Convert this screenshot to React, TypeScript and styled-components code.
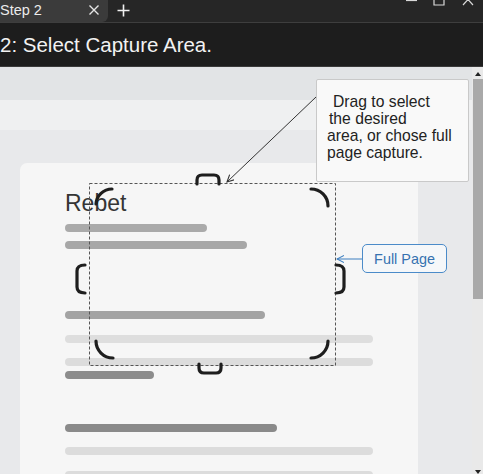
import React from "react";
import styled, { createGlobalStyle } from "styled-components";

const Global = createGlobalStyle`
  html, body { margin: 0; padding: 0; background: #e8e9eb; overflow: hidden; }
  * { box-sizing: border-box; }
`;

const Frame = styled.div`
  position: relative;
  width: 483px;
  height: 474px;
  overflow: hidden;
  font-family: "Liberation Sans", Arial, sans-serif;
  display: flex;
  flex-direction: column;
`;

const TabBar = styled.div`
  height: 23px;
  flex: none;
  display: flex;
  align-items: stretch;
  background: #262626;
  border-bottom: 1px solid #3e3e3e;
`;

const Tab = styled.div`
  width: 108px;
  display: flex;
  align-items: center;
  justify-content: space-between;
  padding: 0 8px 2px 0;
  background: #3b3b3b;
  border-bottom-right-radius: 6px;
  color: #ececec;
  font-size: 14.5px;
`;

const TabIcon = styled.svg`
  flex: none;
  display: block;
`;

const NewTab = styled.div`
  width: 30px;
  display: flex;
  align-items: center;
  justify-content: center;
  padding-bottom: 2px;
`;

const WindowControls = styled.div`
  margin-left: auto;
  display: flex;
  align-items: flex-start;
`;

const TitleBar = styled.div`
  height: 44px;
  flex: none;
  background: #1d1d1d;
  color: #f2f2f2;
  font-size: 20.5px;
  line-height: 24px;
  padding: 10px 0 0 0;
  white-space: nowrap;
  border-bottom: 1px solid #3a3a3a;
`;

const Viewport = styled.div`
  flex: 1;
  display: flex;
  min-height: 0;
`;

const Main = styled.div`
  flex: 1;
  display: flex;
  flex-direction: column;
  min-width: 0;
`;

const Band = styled.div<{ $h: number; $c: string }>`
  height: ${(p) => p.$h}px;
  flex: none;
  background: ${(p) => p.$c};
`;

const Stage = styled.div`
  flex: 1;
  background: #e8e9eb;
  padding: 33px 0 0 20px;
`;

const Card = styled.div`
  width: 398px;
  height: 100%;
  background: #f6f6f6;
  border-radius: 7px 7px 0 0;
  padding: 27px 0 0 45px;
  display: flex;
  flex-direction: column;
  align-items: flex-start;
`;

const Heading = styled.div`
  font-size: 23px;
  line-height: 26px;
  color: #353535;
`;

const Bar = styled.div<{ $w: number; $c: string; $gap: number }>`
  flex: none;
  width: ${(p) => p.$w}px;
  height: 8px;
  margin-top: ${(p) => p.$gap}px;
  border-radius: 4px;
  background: ${(p) => p.$c};
`;

const Scrollbar = styled.div`
  width: 11px;
  flex: none;
  background: #e9e9e9;
  display: flex;
  flex-direction: column;
  align-items: center;
  padding-top: 5px;
`;

const Arrow = styled.div<{ $down?: boolean }>`
  width: 0;
  height: 0;
  border-left: 3px solid transparent;
  border-right: 3px solid transparent;
  ${(p) => (p.$down ? "border-top: 4px solid #222;" : "border-bottom: 4px solid #222;")}
  flex: none;
`;

const Thumb = styled.div`
  margin-top: 3px;
  width: 10px;
  margin-left: 1px;
  height: 220px;
  background: #a9a9a9;
`;

const Spacer = styled.div`
  flex: 1;
`;

const Overlay = styled.svg`
  position: absolute;
  left: 0;
  top: 0;
  pointer-events: none;
`;

const Callout = styled.div`
  position: absolute;
  left: 316px;
  top: 79px;
  width: 153px;
  height: 103px;
  background: #f9f9f9;
  border: 1px solid #c9c9c9;
  border-radius: 2px;
  padding: 13px 0 0 0;
  color: #222;
  font-size: 15.7px;
  line-height: 17px;
`;

const CalloutLine = styled.div<{ $indent: number }>`
  padding-left: ${(p) => p.$indent}px;
  white-space: nowrap;
`;

const FullPage = styled.div`
  position: absolute;
  left: 362px;
  top: 244px;
  width: 85px;
  height: 29px;
  border: 1px solid #4b8bc9;
  border-radius: 5px;
  background: #f5f7f9;
  color: #3572b0;
  font-size: 14.4px;
  display: flex;
  align-items: center;
  justify-content: center;
`;

const bars = [
  { w: 142, c: "#aaaaaa", gap: 8 },
  { w: 182, c: "#a7a7a7", gap: 9 },
  { w: 200, c: "#a3a3a3", gap: 62 },
  { w: 308, c: "#dedede", gap: 16 },
  { w: 308, c: "#dcdcdc", gap: 15 },
  { w: 89, c: "#8c8c8c", gap: 5 },
  { w: 212, c: "#8a8a8a", gap: 45 },
  { w: 308, c: "#dcdcdc", gap: 15 },
  { w: 308, c: "#dcdcdc", gap: 16 },
];

export default function App() {
  return (
    <>
      <Global />
      <Frame>
        <TabBar>
          <Tab>
            <span>Step 2</span>
            <TabIcon width="12" height="12" viewBox="0 0 12 12">
              <path d="M1.5 1.5 L10.5 10.5 M10.5 1.5 L1.5 10.5" stroke="#e6e6e6" strokeWidth="1.4" />
            </TabIcon>
          </Tab>
          <NewTab>
            <TabIcon width="13" height="13" viewBox="0 0 13 13">
              <path d="M6.5 0.5 V12.5 M0.5 6.5 H12.5" stroke="#f0f0f0" strokeWidth="1.6" />
            </TabIcon>
          </NewTab>
          <WindowControls>
            <TabIcon width="80" height="8" viewBox="0 0 80 8">
              <path d="M3 0.5 H14" stroke="#d8d8d8" strokeWidth="1.2" />
              <path d="M31 -4 V5 H41 V-4" stroke="#d8d8d8" strokeWidth="1.2" fill="none" />
              <path d="M60 -6 L70 5 M70 -6 L60 5" stroke="#d8d8d8" strokeWidth="1.2" />
            </TabIcon>
          </WindowControls>
        </TabBar>
        <TitleBar>2: Select Capture Area.</TitleBar>
        <Viewport>
          <Main>
            <Band $h={33} $c="#e2e4e6" />
            <Band $h={30} $c="#eff0f1" />
            <Stage>
              <Card>
                <Heading>Rebet</Heading>
                {bars.map((b, i) => (
                  <Bar key={i} $w={b.w} $c={b.c} $gap={b.gap} />
                ))}
              </Card>
            </Stage>
          </Main>
          <Scrollbar>
            <Arrow />
            <Thumb />
            <Spacer />
            <Arrow $down />
          </Scrollbar>
        </Viewport>

        <Overlay width="483" height="474" viewBox="0 0 483 474">
          <defs>
            <marker id="ah" markerWidth="8" markerHeight="8" refX="7" refY="4" orient="auto" markerUnits="userSpaceOnUse">
              <path d="M0 0.5 L7 4 L0 7.5" fill="none" stroke="#333" strokeWidth="1.1" />
            </marker>
            <marker id="ahb" markerWidth="8" markerHeight="8" refX="7" refY="4" orient="auto" markerUnits="userSpaceOnUse">
              <path d="M0 0.5 L7 4 L0 7.5" fill="none" stroke="#3d7fc0" strokeWidth="1.1" />
            </marker>
          </defs>
          <rect x="89.5" y="183.5" width="246" height="182" fill="none" stroke="#555" strokeWidth="1" strokeDasharray="3 2" />
          <g fill="none" stroke="#1e1e1e" strokeWidth="3.2" strokeLinecap="round">
            <path d="M96 204 A16 16 0 0 1 112 189" />
            <path d="M311 189 A17 17 0 0 1 328 206" />
            <path d="M96 341 A17 17 0 0 0 113 358" />
            <path d="M311 358 A17 17 0 0 0 328 341" />
            <path d="M197 184 V180 Q197 175 202 175 H214 Q219 175 219 180 V184" />
            <path d="M199 364 V368 Q199 373 204 373 H216 Q221 373 221 368 V364" />
            <path d="M85 265 Q77 265 77 271 V287 Q77 293 85 293" />
            <path d="M336 265 Q344 265 344 271 V287 Q344 293 336 293" />
          </g>
          <line x1="316" y1="97" x2="227" y2="182" stroke="#333" strokeWidth="1" markerEnd="url(#ah)" />
          <line x1="362" y1="259" x2="337" y2="259" stroke="#3d7fc0" strokeWidth="1" markerEnd="url(#ahb)" />
        </Overlay>

        <Callout>
          <CalloutLine $indent={16}>Drag to select</CalloutLine>
          <CalloutLine $indent={12}>the desired</CalloutLine>
          <CalloutLine $indent={10}>area, or chose full</CalloutLine>
          <CalloutLine $indent={10}>page capture.</CalloutLine>
        </Callout>
        <FullPage>Full Page</FullPage>
      </Frame>
    </>
  );
}
